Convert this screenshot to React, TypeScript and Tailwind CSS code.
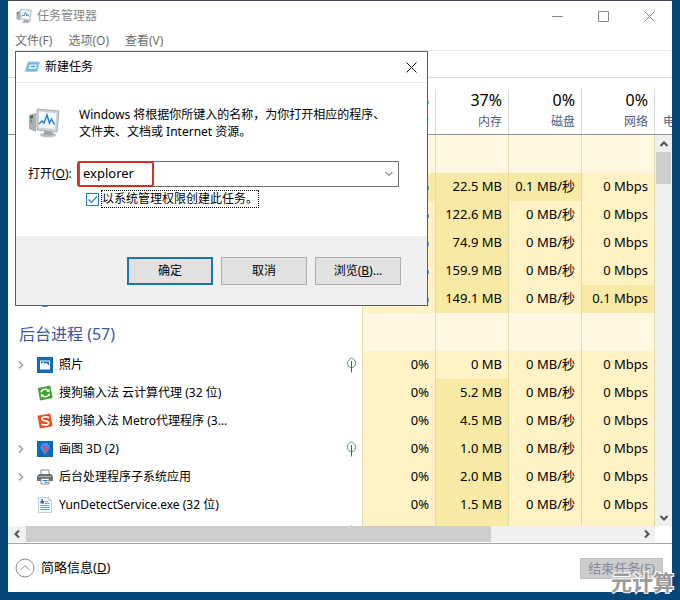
import { useState } from 'react';
import type { ReactNode } from 'react';

type IconKind = 'photo' | 'cloud' | 'sogou' | 'paint' | 'printer' | 'doc' | 'edge';

interface Cell {
  text: string;
  hot?: boolean;
}

interface ProcessRow {
  id: string;
  name?: string;
  icon?: IconKind;
  expandable?: boolean;
  suspended?: boolean;
  cells: Cell[];
}

const APPS: ProcessRow[] = [
  { id: 'a1', cells: [{ text: '0.4%', hot: true }, { text: '22.5 MB', hot: true }, { text: '0.1 MB/秒', hot: true }, { text: '0 Mbps' }] },
  { id: 'a2', cells: [{ text: '0%' }, { text: '122.6 MB', hot: true }, { text: '0 MB/秒' }, { text: '0 Mbps' }] },
  { id: 'a3', cells: [{ text: '0%' }, { text: '74.9 MB', hot: true }, { text: '0 MB/秒' }, { text: '0 Mbps' }] },
  { id: 'a4', cells: [{ text: '0%' }, { text: '159.9 MB', hot: true }, { text: '0 MB/秒' }, { text: '0 Mbps' }] },
  { id: 'a5', icon: 'edge', cells: [{ text: '0%' }, { text: '149.1 MB', hot: true }, { text: '0 MB/秒' }, { text: '0.1 Mbps', hot: true }] },
];

const BACKGROUND: ProcessRow[] = [
  { id: 'b1', name: '照片', icon: 'photo', expandable: true, suspended: true, cells: [{ text: '0%' }, { text: '0 MB' }, { text: '0 MB/秒' }, { text: '0 Mbps' }] },
  { id: 'b2', name: '搜狗输入法 云计算代理 (32 位)', icon: 'cloud', cells: [{ text: '0%' }, { text: '5.2 MB', hot: true }, { text: '0 MB/秒' }, { text: '0 Mbps' }] },
  { id: 'b3', name: '搜狗输入法 Metro代理程序 (3...', icon: 'sogou', cells: [{ text: '0%' }, { text: '4.5 MB', hot: true }, { text: '0 MB/秒' }, { text: '0 Mbps' }] },
  { id: 'b4', name: '画图 3D (2)', icon: 'paint', expandable: true, suspended: true, cells: [{ text: '0%' }, { text: '1.0 MB', hot: true }, { text: '0 MB/秒' }, { text: '0 Mbps' }] },
  { id: 'b5', name: '后台处理程序子系统应用', icon: 'printer', expandable: true, cells: [{ text: '0%' }, { text: '2.0 MB', hot: true }, { text: '0 MB/秒' }, { text: '0 Mbps' }] },
  { id: 'b6', name: 'YunDetectService.exe (32 位)', icon: 'doc', cells: [{ text: '0%' }, { text: '1.5 MB', hot: true }, { text: '0 MB/秒' }, { text: '0 Mbps' }] },
  { id: 'b7', suspended: true, cells: [{ text: '' }, { text: '', hot: true }, { text: '' }, { text: '' }] },
];

const COLUMNS = [
  { usage: '5%', label: 'CPU' },
  { usage: '37%', label: '内存' },
  { usage: '0%', label: '磁盘' },
  { usage: '0%', label: '网络' },
];

function Chevron({ dir, className }: { dir: 'up' | 'down' | 'left' | 'right'; className: string }) {
  const d = { up: 'M1.5 7 5 3.5 8.5 7', down: 'M1.5 3 5 6.5 8.5 3', left: 'M7 1.5 3.5 5 7 8.5', right: 'M3 1.5 6.5 5 3 8.5' }[dir];
  return (
    <svg viewBox="0 0 10 10" className={className} fill="none" stroke="currentColor">
      <path d={d} />
    </svg>
  );
}

function Leaf() {
  return (
    <svg viewBox="0 0 12 16" className="h-4 w-3" fill="none" stroke="#4f9a5c">
      <path d="M6.500.800C4.800 2 2.300 3.300 2.300 6.300c0 2.300 1.800 4.200 4.200 4.200s4.200-1.900 4.200-4.200C10.700 3.300 8.200 2 6.500.800Z" />
      <path d="M6.500 4v11.500" stroke="#2a7338" />
    </svg>
  );
}

function ProcessIcon({ kind }: { kind: IconKind }) {
  return (
    <svg viewBox="0 0 16 16" className="h-4 w-4 shrink-0">
      {kind === 'photo' && (
        <>
          <rect width="16" height="16" fill="#0f6cb5" />
          <path d="M3 3.500h10v9H3z" fill="#fff" />
          <path d="M4 7.500 6.200 5l1.600 2 1.400-1.200L12 8.500V4.500H4Z" fill="#0f6cb5" />
          <path d="m4.200 7.500 2-2.300 1.600 2.200-1 1.100H4.200Z" fill="#fff" />
        </>
      )}
      {kind === 'cloud' && (
        <>
          <path d="m.800 3 12.500-2.500L15.700 13 3 15.500Z" fill="#45a02f" />
          <path d="M4 7.300C4.800 4.200 8.800 3.300 11 5.400M12.500 8.700c-.7 3-4.800 4-7 1.900" fill="none" stroke="#fff" strokeWidth="1.600" />
          <path d="m12.700 3.500-.2 3.800-3.400-1ZM3.800 12.600l.2-3.800 3.300 1.100Z" fill="#fff" />
        </>
      )}
      {kind === 'sogou' && (
        <>
          <path d="m.500 2.800 12.800-2.300 2.300 12.700-12.800 2.300Z" fill="#f0501e" />
          <path d="M12 4.600C8.800 3.300 4.700 3.900 4.800 6c.1 2.300 6.900 1.500 6.900 3.900 0 2.100-4.300 2.600-7.200 1.300" fill="none" stroke="#fff" strokeWidth="1.700" />
        </>
      )}
      {kind === 'paint' && (
        <>
          <rect width="16" height="16" fill="#0b6ab8" />
          <path d="M8 2C5 2 3.500 4 3.500 6.300 3.500 9 6.500 10.500 8 14c1.500-3.500 4.500-5 4.500-7.700C12.500 4 11 2 8 2Z" fill="#31a8ee" />
          <path d="M8 3C5.600 3 4.500 4.800 4.700 6.500L8 9Z" fill="#7d63d8" />
          <path d="M8 5.200c1.500-1.500 4 0 3.400 2C10.800 9 9 9.800 8 12Z" fill="#c24fa5" />
          <path d="M6 8.500 8 7l2 1.500-2 4Z" fill="#e5486b" />
        </>
      )}
      {kind === 'printer' && (
        <>
          <path d="M4 1h8v5H4z" fill="#fff" stroke="#888" />
          <path d="M2 5h12l2 2.500V12H0V7.500Z" fill="#6b7074" />
          <path d="M2 7.500h12" stroke="#b4b9bd" />
          <path d="M4 9.500h8V15H4z" fill="#fff" stroke="#888" />
          <path d="M5.500 11.500h5M7.500 13.300h3" stroke="#2e7fc2" />
        </>
      )}
      {kind === 'doc' && (
        <>
          <path d="M1.500.500h10l3 3v12h-13Z" fill="#f6fafc" stroke="#c3ccd2" />
          <path d="M11.500.500v3h3" fill="none" stroke="#c3ccd2" />
          <path d="M4.500 2h1.500v2h1v2.500H3.500V4h1Z" fill="#2f6f9f" />
          <path d="M8 4.500h3M8 6.500h4.500M3.500 8.500h9M3.500 10.500h9M3.500 12.500h9" stroke="#6b9dc2" />
        </>
      )}
      {kind === 'edge' && <circle cx="8" cy="8.500" r="7.500" fill="#1680b4" />}
    </svg>
  );
}

function MonitorIcon({ className }: { className: string }) {
  return (
    <svg viewBox="0 0 32 30" className={className}>
      <path d="m1 7 7-2v19l-7-3Z" fill="#a9aeb2" />
      <path d="m2 8 3-1v3L2 11Z" fill="#5d6468" />
      <path d="m2 12 2-.5v3H2Z" fill="#58ac66" />
      <ellipse cx="20" cy="27" rx="8" ry="2.500" fill="#b9bdc0" />
      <path d="M16 22h8l1 5h-9Z" fill="#9fa4a8" />
      <path d="m9 1 22 2-2 21-20-2Z" fill="#ced2d5" stroke="#a9aeb2" />
      <path d="m11 3.500 17.500 1.800-1.500 15.700-16-1.600Z" fill="#f2f9fd" />
      <path d="m11 16 3-3 2 2 3-8 2.500 8 2-4 3 5.500" fill="none" stroke="#2b7fbd" strokeWidth="1.500" />
    </svg>
  );
}

function ProcessTable() {
  const groups = [
    { title: '', rows: APPS },
    { title: '后台进程 (57)', rows: BACKGROUND },
  ];
  return (
    <table className="w-full table-fixed border-separate border-spacing-0">
      <colgroup>
        <col />
        <col className="w-[73px]" />
        <col className="w-[73px]" />
        <col className="w-[73px]" />
        <col className="w-[73px]" />
        <col className="w-[17px]" />
      </colgroup>
      <thead>
        <tr className="h-[57px]">
          <th className="border-b border-[#8e8e8e]" aria-label="名称" />
          {COLUMNS.map((c) => (
            <th key={c.label} className="border-b border-[#8e8e8e] p-0 pt-3 text-right font-normal">
              <div className="flex h-11 flex-col border-r border-[#d8d8d8] pr-1.5">
                <span className="text-base leading-5">{c.usage}</span>
                <span className="pt-1 text-xs leading-4 text-[#4c6283]">{c.label}</span>
              </div>
            </th>
          ))}
          <th className="overflow-hidden border-b border-[#8e8e8e] p-0 pt-9 pl-2 text-left align-top text-xs font-normal whitespace-nowrap text-[#4c6283]">
            电
          </th>
        </tr>
      </thead>
      {groups.map((g) => (
        <tbody key={g.title}>
          <tr className="h-[38px]">
            <th className="border-r border-[#e3d9a6] p-0 pt-1 pl-[11px] text-left text-base font-normal text-[#3b57a0]">{g.title}</th>
            {COLUMNS.map((c) => <td key={c.label} className="border-r border-[#e5dcb8] bg-[#fff7e1]" />)}
            <td />
          </tr>
          {g.rows.map((r) => (
            <tr key={r.id} className="h-7">
              <td className="border-r border-[#e3d9a6] p-0">
                <div className="flex items-center pr-[5px] pl-2">
                  <span className="w-[21px] shrink-0">
                    {r.expandable && <Chevron dir="right" className="h-2.5 w-2.5 stroke-[1.6] text-[#a0a0a0]" />}
                  </span>
                  {r.icon && <ProcessIcon kind={r.icon} />}
                  <span className="flex-1 truncate pl-1.5 text-xs">{r.name}</span>
                  {r.suspended && <Leaf />}
                </div>
              </td>
              {r.cells.map((c, i) => (
                <td key={i} className={`border-r border-[#e3d9a6] p-0 pr-1.5 text-right text-[13px] whitespace-nowrap ${c.hot ? 'bg-[#f8eaa4]' : 'bg-[#fff2c4]'}`}>
                  {c.text}
                </td>
              ))}
              <td />
            </tr>
          ))}
        </tbody>
      ))}
    </table>
  );
}

function DialogButton({ children, primary, onClick }: { children: ReactNode; primary?: boolean; onClick?: () => void }) {
  return (
    <button
      type="button"
      onClick={onClick}
      className={`h-7 w-[86px] bg-[#e1e1e1] text-xs ${primary ? 'border-2 border-[#1874b8]' : 'border border-[#adadad]'}`}
    >
      {children}
    </button>
  );
}

function RunDialog({ onClose }: { onClose: () => void }) {
  const [command, setCommand] = useState('explorer');
  const [admin, setAdmin] = useState(true);

  return (
    <div role="dialog" aria-labelledby="run-title" className="absolute top-[51px] left-[15px] w-[413px] border border-[#5c5c5c] bg-white text-xs">
      <div className="flex h-[31px] items-center border-b border-[#ececec] pr-2.5 pl-2">
        <svg viewBox="0 0 16 12" className="h-3 w-4" fill="none">
          <path d="M4 1h11.500l-2.500 9.500H1Z" fill="#6bb8e2" stroke="#9fd3ee" />
          <path d="M5.500 3.500H13l-1 4.500H4.500Z" fill="#d4edf9" />
          <path d="M7 5.500h4" stroke="#358fc4" />
        </svg>
        <h2 id="run-title" className="flex-1 pl-[5px]">新建任务</h2>
        <button type="button" aria-label="关闭" onClick={onClose}>
          <svg viewBox="0 0 11 11" className="h-[11px] w-[11px]" stroke="#111">
            <path d="m.500.500 10 10m0-10-10 10" />
          </svg>
        </button>
      </div>

      <div className="px-3 pt-[23px] pb-7">
        <div className="flex">
          <MonitorIcon className="mt-0.5 h-[30px] w-8" />
          <p className="pl-[19px] leading-[17px]">
            Windows 将根据你所键入的名称，为你打开相应的程序、
            <br />
            文件夹、文档或 Internet 资源。
          </p>
        </div>
        <div className="flex items-center pt-[21px]">
          <label htmlFor="command" className="w-[51px] shrink-0">打开(<u>O</u>):</label>
          <div className="relative flex h-[26px] w-80 items-center border border-[#707070] pr-1">
            <input id="command" value={command} onChange={(e) => setCommand(e.target.value)} className="min-w-0 flex-1 pl-[3px] text-[13px] outline-none" />
            <button type="button" aria-label="展开列表">
              <Chevron dir="down" className="h-2.5 w-2.5 text-[#444]" />
            </button>
            <span className="pointer-events-none absolute -top-px -left-[3px] h-[26px] w-[77px] rounded-[3px] border-2 border-[#d22f27]" />
          </div>
        </div>
        <label className="flex items-center gap-0.5 pt-[3px] pl-[58px]">
          <span className="relative flex">
            <input
              type="checkbox"
              checked={admin}
              onChange={(e) => setAdmin(e.target.checked)}
              className="peer h-[13px] w-[13px] appearance-none border border-[#2a7cc0] bg-white"
            />
            <svg viewBox="0 0 13 13" className="pointer-events-none absolute inset-0 hidden h-[13px] w-[13px] peer-checked:block" fill="none" stroke="#2a7cc0" strokeWidth="1.200">
              <path d="m2.500 6.500 3 3 5.500-6" />
            </svg>
          </span>
          <span className="border border-dotted border-black leading-4">以系统管理权限创建此任务。</span>
        </label>
      </div>

      <div className="flex h-[69px] items-start justify-end gap-2 bg-[#f0f0f0] pt-[21px] pr-[26px]">
        <DialogButton primary onClick={onClose}>确定</DialogButton>
        <DialogButton onClick={onClose}>取消</DialogButton>
        <DialogButton>浏览(<u>B</u>)...</DialogButton>
      </div>
    </div>
  );
}

export default function App() {
  const [open, setOpen] = useState(true);

  return (
    <div lang="zh-CN" className="relative h-screen overflow-hidden bg-[#06477a] px-2 pb-2 font-['Noto_Sans','Noto_Sans_CJK_SC',sans-serif] text-black">
      <div className="flex h-full flex-col border-t border-[#3d4650] bg-white">
        <header className="flex h-[30px] shrink-0 items-center pl-2 text-[#868686]">
          <MonitorIcon className="h-4 w-4" />
          <h1 className="flex-1 pl-[5px] text-xs">任务管理器</h1>
          <button type="button" aria-label="最小化" className="flex h-full w-[46px] items-center justify-center">
            <svg viewBox="0 0 11 11" className="h-[11px] w-[11px]" stroke="currentColor"><path d="M0 5.500h11" /></svg>
          </button>
          <button type="button" aria-label="最大化" className="flex h-full w-[46px] items-center justify-center">
            <svg viewBox="0 0 11 11" className="h-[11px] w-[11px]" stroke="currentColor" fill="none"><path d="M.500.500h10v10H.500Z" /></svg>
          </button>
          <button type="button" aria-label="关闭窗口" className="flex h-full w-[46px] items-center justify-center">
            <svg viewBox="0 0 11 11" className="h-[11px] w-[11px]" stroke="currentColor"><path d="m.500.500 10 10m0-10-10 10" /></svg>
          </button>
        </header>
        <nav className="flex h-5 shrink-0 items-center gap-4 border-b border-[#ececec] pl-[7px] text-xs leading-4 text-[#6d6d6d]">
          <button type="button" onClick={() => setOpen(true)}>文件(F)</button>
          <button type="button">选项(O)</button>
          <button type="button">查看(V)</button>
        </nav>
        <div className="h-[27px] shrink-0 border-b border-[#d4d4d4]" />

        <main className="relative min-h-0 flex-1 overflow-hidden">
          <ProcessTable />
          <div className="absolute top-[57px] right-0 bottom-0 flex w-[17px] flex-col bg-[#f0f0f0] text-[#505050]">
            <button type="button" aria-label="向上滚动" className="flex h-[17px] items-center justify-center">
              <Chevron dir="up" className="h-2.5 w-2.5 stroke-2" />
            </button>
            <div className="mx-px flex-1"><div className="h-8 bg-[#cdcdcd]" /></div>
            <button type="button" aria-label="向下滚动" className="flex h-[17px] items-center justify-center">
              <Chevron dir="down" className="h-2.5 w-2.5 stroke-2" />
            </button>
          </div>
        </main>

        <div className="flex h-[18px] shrink-0 border-b border-[#a0a0a0] pr-[17px] pb-px text-[#505050]">
          <div className="flex flex-1 bg-[#f0f0f0]">
            <button type="button" aria-label="向左滚动" className="flex w-[18px] items-center justify-center">
              <Chevron dir="left" className="h-2.5 w-2.5 stroke-2" />
            </button>
            <div className="flex-1"><div className="h-full w-[76%] bg-[#cdcdcd]" /></div>
            <button type="button" aria-label="向右滚动" className="flex w-[17px] items-center justify-center">
              <Chevron dir="right" className="h-2.5 w-2.5 stroke-2" />
            </button>
          </div>
        </div>

        <footer className="flex h-12 shrink-0 items-center justify-between pr-[9px] pl-[7px] text-[13px]">
          <button type="button" className="flex items-center gap-1.5">
            <svg viewBox="0 0 20 20" className="h-5 w-5" fill="none" stroke="#8a8a8a">
              <circle cx="10" cy="10" r="9" />
              <path d="m5.500 12 4.500-4.500 4.500 4.500" />
            </svg>
            <span>简略信息(<u>D</u>)</span>
          </button>
          <button type="button" disabled className="h-[21px] w-[83px] border border-[#bfbfbf] bg-[#cccccc] leading-[18px] text-[#8588a3]">
            结束任务(<u>F</u>)
          </button>
        </footer>
      </div>

      {open && <RunDialog onClose={() => setOpen(false)} />}
      <span className="pointer-events-none absolute right-1.5 bottom-1 text-[21px] leading-7 font-bold text-[#9a9a9a] [-webkit-text-stroke:2px_white] [paint-order:stroke_fill]">
        元计算
      </span>
    </div>
  );
}
